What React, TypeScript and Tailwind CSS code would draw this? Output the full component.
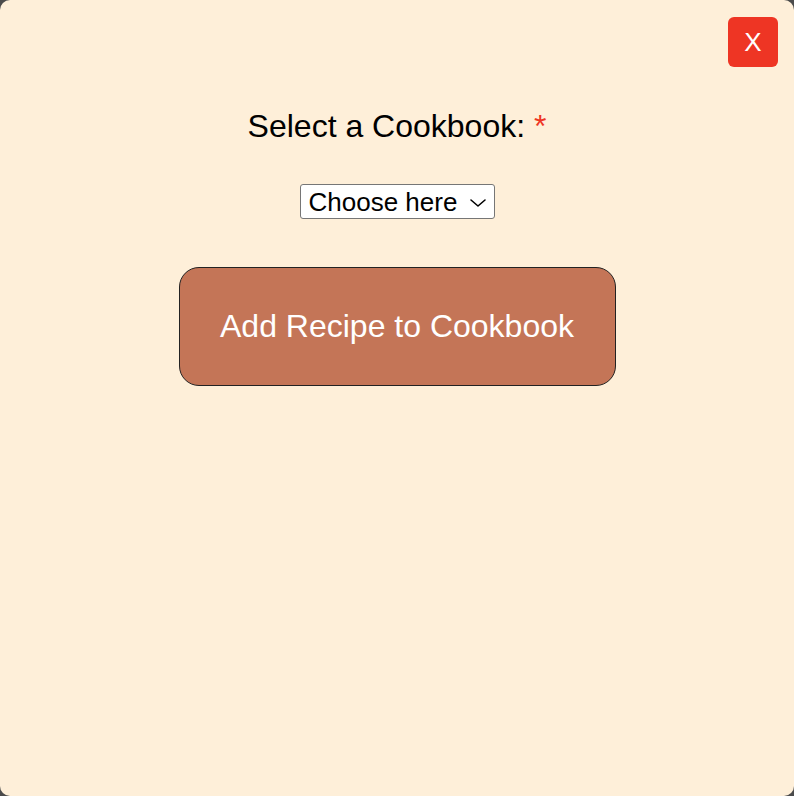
import React from "react";

export default function App() {
  return (
    <div className="w-[794px] h-[796px] bg-[#4b4b4b]" style={{ fontFamily: '"Liberation Sans", Arial, sans-serif' }}>
      <div className="relative w-full h-full bg-[#FEEFD9] rounded-[10px] flex flex-col items-center pt-[108px]">
        <button className="absolute top-[17px] right-[16px] w-[50px] h-[50px] rounded-[6px] bg-[#EE3524] text-white text-[26px] leading-none flex items-center justify-center">
          X
        </button>
        <label className="text-[32px] leading-[36px] text-black">
          Select a Cookbook: <span className="text-[#EE3524]">*</span>
        </label>
        <div className="relative mt-[40px]">
          <select className="appearance-none text-[26px] leading-[30px] bg-white text-black border border-[#767676] rounded-[3px] h-[35px] w-[195px] pl-[8px] pr-[30px]">
            <option>Choose here</option>
          </select>
          <svg className="absolute right-[8px] top-[14px] pointer-events-none" width="18" height="10" viewBox="0 0 18 10" fill="none">
            <path d="M2 2 L9 8 L16 2" stroke="#000" strokeWidth="1.6" strokeLinecap="round" strokeLinejoin="round" />
          </svg>
        </div>
        <button className="mt-[48px] bg-[#C47557] text-white text-[32px] leading-[37px] py-[40px] w-[437px] border-[1.5px] border-[#222] rounded-[20px]">
          Add Recipe to Cookbook
        </button>
      </div>
    </div>
  );
}
